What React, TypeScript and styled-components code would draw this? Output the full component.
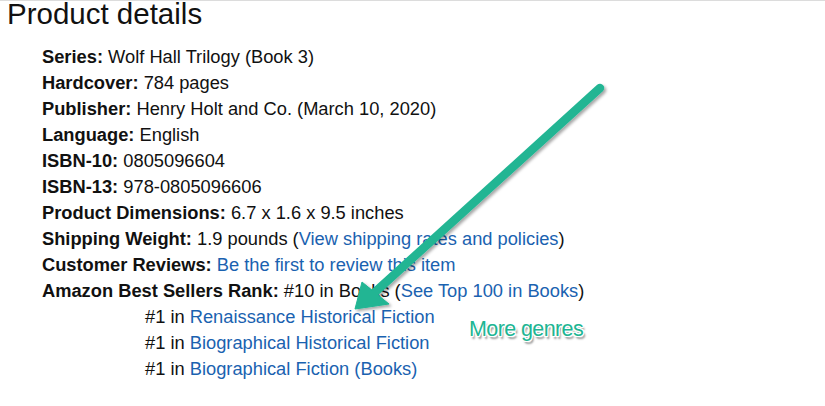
import type { ReactNode } from "react";
import styled, { createGlobalStyle } from "styled-components";

const GlobalStyle = createGlobalStyle`
  html, body {
    margin: 0;
    padding: 0;
    background: #fff;
  }
  body {
    font-family: "Liberation Sans", Arial, sans-serif;
    color: #111;
  }
`;

const Page = styled.div`
  position: relative;
  width: 825px;
  height: 406px;
  overflow: hidden;
  border-top: 1px solid #dcdcdc;
  box-sizing: border-box;
`;

const Title = styled.h2`
  margin: 0;
  padding-left: 7px;
  font-size: 29.5px;
  font-weight: 400;
  line-height: 26px;
  color: #111;
`;

const DetailList = styled.div`
  margin-top: 17px;
  padding-left: 42px;
  display: flex;
  flex-direction: column;
  font-size: 18.3px;
  line-height: 26px;
`;

const Row = styled.div`
  white-space: nowrap;
`;

const SubRow = styled.div`
  padding-left: 103px;
  white-space: nowrap;
`;

const Label = styled.span`
  font-weight: 700;
`;

const Link = styled.a`
  color: #1a62b0;
  cursor: pointer;
  text-decoration: none;
`;

const Arrow = styled.svg`
  position: absolute;
  left: 0;
  top: 0;
  pointer-events: none;
`;

const Callout = styled.div`
  position: absolute;
  left: 469px;
  top: 316px;
  font-family: "Liberation Sans Narrow", "Liberation Sans", Arial, sans-serif;
  font-size: 21.5px;
  letter-spacing: -0.6px;
  color: #20b593;
  text-shadow:
    1px 0 0 #fff, -1px 0 0 #fff, 0 1px 0 #fff, 0 -1px 0 #fff,
    1px 1px 0 #fff, -1px -1px 0 #fff, 1px -1px 0 #fff, -1px 1px 0 #fff,
    2px 3px 2px rgba(0, 0, 0, 0.45);
`;

const getDetails = (): { label: string; value: ReactNode }[] => [
  { label: "Series", value: "Wolf Hall Trilogy (Book 3)" },
  { label: "Hardcover", value: "784 pages" },
  { label: "Publisher", value: "Henry Holt and Co. (March 10, 2020)" },
  { label: "Language", value: "English" },
  { label: "ISBN-10", value: "0805096604" },
  { label: "ISBN-13", value: "978-0805096606" },
  { label: "Product Dimensions", value: "6.7 x 1.6 x 9.5 inches" },
  {
    label: "Shipping Weight",
    value: (
      <>
        1.9 pounds (<Link>View shipping rates and policies</Link>)
      </>
    ),
  },
  {
    label: "Customer Reviews",
    value: <Link>Be the first to review this item</Link>,
  },
  {
    label: "Amazon Best Sellers Rank",
    value: (
      <>
        #10 in Books (<Link>See Top 100 in Books</Link>)
      </>
    ),
  },
];

const genres = [
  "Renaissance Historical Fiction",
  "Biographical Historical Fiction",
  "Biographical Fiction (Books)",
];

const App = () => {
  const details = getDetails();
  return (
    <Page>
      <GlobalStyle />
      <Title>Product details</Title>
      <DetailList>
        {details.map((d, i) => (
          <Row key={i}>
            <Label>{d.label}:</Label> {d.value}
          </Row>
        ))}
        {genres.map((g, i) => (
          <SubRow key={i}>
            #1 in <Link>{g}</Link>
          </SubRow>
        ))}
      </DetailList>

      <Arrow viewBox="0 0 825 406" width="825" height="406">
        <defs>
          <filter id="shadow" x="-20%" y="-20%" width="140%" height="140%">
            <feDropShadow dx="2" dy="2" stdDeviation="1.6" floodColor="#000" floodOpacity="0.35" />
          </filter>
        </defs>
        <g filter="url(#shadow)" fill="#20b593" stroke="#20b593">
          <line x1="600" y1="87" x2="374" y2="292" strokeWidth="8.5" strokeLinecap="round" />
          <polygon points="355,308 362,281 389,303" strokeWidth="1" strokeLinejoin="round" />
        </g>
      </Arrow>

      <Callout>More genres</Callout>
    </Page>
  );
};

export default App;
